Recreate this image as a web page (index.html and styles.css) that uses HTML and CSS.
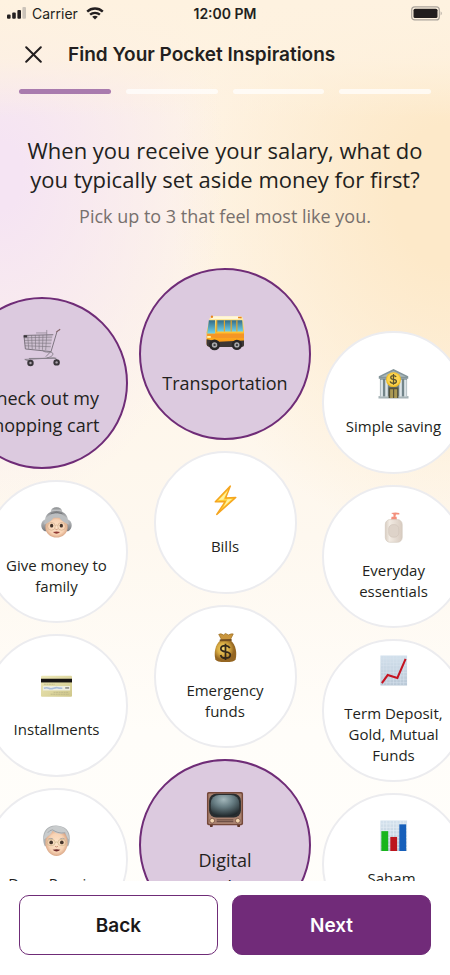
FILE: index.html
```html
<!DOCTYPE html>
<html lang="en">
<head>
<meta charset="utf-8">
<meta name="viewport" content="width=device-width, initial-scale=1">
<title>Find Your Pocket Inspirations</title>
<link rel="stylesheet" href="styles.css">
</head>
<body>
<div class="status">
  <div class="status-left">
    <svg width="19" height="12" viewBox="0 0 19 12" aria-hidden="true"><g fill="#231f20"><rect x="0" y="7.500" width="3.600" height="4.300" rx="1"/><rect x="5.200" y="5.500" width="3.600" height="6.300" rx="1"/><rect x="10.400" y="3" width="3.600" height="8.800" rx="1"/></g><rect x="15.400" y="0" width="3.600" height="11.800" rx="1" fill="#cbc3b9"/></svg>
    <span class="carrier">Carrier</span>
    <svg width="18" height="13" viewBox="0 0 18 13" aria-hidden="true"><g fill="none" stroke="#231f20" stroke-width="2.400"><path d="M1.200 4.600C5.600.500 12.400.500 16.800 4.600"/><path d="M4.100 7.700c2.800-2.500 7-2.500 9.800 0"/></g><path d="M6.200 9.700c1.600-1.400 4-1.400 5.600 0L9 12.500z" fill="#231f20"/></svg>
  </div>
  <span class="time">12:00 PM</span>
  <div class="status-right">
    <svg width="32" height="15" viewBox="0 0 32 15" aria-hidden="true"><rect x=".7" y=".9" width="27.600" height="13" rx="3" fill="none" stroke="#aaa39b" stroke-width="1.200"/><rect x="2.500" y="2.700" width="24" height="9.400" rx="1.500" fill="#211d1e"/><path d="M29.700 5.200q2 2 0 4.400z" fill="#aaa39b"/></svg>
  </div>
</div>
<header class="header">
  <button class="close" type="button" aria-label="Close">
    <svg width="17" height="17" viewBox="0 0 17 17"><path d="M1.200 1.200 15.800 15.800M15.800 1.200 1.200 15.800" stroke="#231f20" stroke-width="2" stroke-linecap="round"/></svg>
  </button>
  <h1 class="title">Find Your Pocket Inspirations</h1>
</header>
<div class="steps"><span class="step step-on"></span><span class="step"></span><span class="step"></span><span class="step"></span></div>
<main class="main">
  <h2 class="question">When you receive your salary, what do you typically set aside money for first?</h2>
  <p class="hint">Pick up to 3 that feel most like you.</p>
  <div class="picker">
    <div class="column column-left">
      <label class="bubble"><input class="tick" type="checkbox" checked>
        <svg class="icon" viewBox="0 0 32 32"><g transform="translate(0 1.500)"><path d="M.8 5.500 25 4.800 22.800 18.200 2 16.800z" fill="#cdbfd0"/><g fill="none" stroke="#7a737d" stroke-width=".5"><path d="M.8 7.600 24.600 7M1 9.800 24.200 9.500M1.200 12l22.600.2M1.600 14.300l21.800.8M4 5.500l.8 11.500M7.200 5.400l.6 11.800M10.400 5.300l.2 12M13.600 5.300v12.200M16.800 5.200l-.4 12.500M20 5l-.9 13M20 1v4M11 3.500h9"/></g><path d="M31 .6 28.600 2.500 23.600 19.200 2 17 .8 5.600 25.500 5" fill="none" stroke="#77707a" stroke-width=".8"/><path d="m28.200 2.600 2.800-2" stroke="#8a6a70" stroke-width="1" stroke-linecap="round"/><path d="M16 18c3 3 7.500.5 9 2.500 1 2-2 3.500-5 4M23.600 19l-4.400 4.500M1.500 25.800 26 24.500q2 0 2.500 2M1.500 25.800l4 1.700M5 25l23-.2" fill="none" stroke="#857e88" stroke-width=".8"/><g fill="#3a363b"><circle cx="6.300" cy="28.800" r="2.700"/><circle cx="28.300" cy="28.300" r="2.700"/><rect x=".6" y="5.500" width="2.800" height="1.800"/></g><g fill="#aca4ad"><circle cx="6.300" cy="28.800" r="1"/><circle cx="28.300" cy="28.300" r="1"/></g></g></svg>
        <span class="text">Check out my shopping cart</span></label>
      <label class="bubble"><input class="tick" type="checkbox">
        <svg class="icon" viewBox="0 0 32 32"><defs><linearGradient id="hair" x2="0" y2="1"><stop stop-color="#7f8285"/><stop offset=".4" stop-color="#c5c7c9"/><stop offset="1" stop-color="#77797d"/></linearGradient><radialGradient id="skin"><stop stop-color="#fde4ca"/><stop offset=".7" stop-color="#f8d3b4"/><stop offset="1" stop-color="#dba989"/></radialGradient></defs><ellipse cx="16" cy="5" rx="6" ry="4.800" fill="url(#hair)"/><path d="M16 4C8 4 5 8 4 13c-5 2-5 10 0 12h24c5-2 5-10 0-12C27 8 24 4 16 4z" fill="url(#hair)"/><path d="M16 10C9 10 5 14 4.500 20 4 27 10 31.500 16 31.500S28 27 27.500 20C27 14 23 10 16 10z" fill="url(#skin)"/><path d="M3 18C5 9 12 6 16 7c4-1 11 2 13 11-4-1-8-4-10-7h-6c-2 3-6 6-10 7z" fill="#bbbec0"/><path d="M10 7q6-3 12 0" fill="none" stroke="#6f7275" stroke-width=".8"/><g fill="#46362c"><ellipse cx="11" cy="19.300" rx="1.700" ry="1.900"/><ellipse cx="21" cy="19.300" rx="1.700" ry="1.900"/></g><g fill="none" stroke="#cfae8b" stroke-width=".7"><circle cx="10.700" cy="20" r="4"/><circle cx="21.300" cy="20" r="4"/><path d="M14.700 19q1.300-1 2.600 0"/></g><path d="M14.800 22.800q1.200 1 2.400 0" fill="none" stroke="#c99174"/><path d="M12.300 25.700q3.700-1 7.400 0-3.700 3.600-7.400 0z" fill="#8f3a35"/></svg>
        <span class="text">Give money to family</span></label>
      <label class="bubble"><input class="tick" type="checkbox">
        <svg class="icon" viewBox="0 0 32 32"><defs><linearGradient id="card" x2="1" y2="1"><stop stop-color="#eee9b8"/><stop offset="1" stop-color="#cfc78a"/></linearGradient></defs><rect x="0" y="5" width="32" height="21.500" rx="1" fill="url(#card)"/><rect y="8" width="32" height="3.800" fill="#181514"/><rect x="2" y="15.500" width="28" height="4.600" fill="#eeeee0"/><path d="M3 17.800q3-1 5 0t5 0 4-.5 5 .5" fill="none" stroke="#a9bdd8" stroke-width="1.700"/><path d="M25 17.500h4" stroke="#494b50"/><path d="M3 13.700h11M13 22h15M10 24h19" stroke="#b9b287" stroke-width=".8" stroke-dasharray="2 .6"/></svg>
        <span class="text">Installments</span></label>
      <label class="bubble"><input class="tick" type="checkbox">
        <svg class="icon" viewBox="0 0 32 32"><path d="M16 .5C7 0 2 6 2.300 14c0 4 .7 6 1.700 8h24c1-2 1.700-4 1.700-8C30 6 25 1 16 .5z" fill="#adb1b3"/><path d="M16 5C8 5 4.500 11 4.500 18.500 4.500 26 10 32 16 32s11.500-6 11.500-13.500C27.500 11 24 5 16 5z" fill="url(#skin)"/><path d="M3 15C3 6 8 1 16 1s13 5 13 14c-2-1-3-5-4-7-5 2-9 1-13-2-2 5-5 5-6 7z" fill="#c9cccd"/><path d="M12 5c3 2 7 4 13 3M7 8q2-3 5-3" fill="none" stroke="#96999c" stroke-width=".8"/><path d="M7.500 14.500q3-1.500 5 0M19.500 14.500q3-1.500 5 0" fill="none" stroke="#aaa59f"/><g fill="#46362c"><circle cx="10.500" cy="18" r="1.900"/><circle cx="21.500" cy="18" r="1.900"/></g><g fill="none" stroke="#cbb78c" stroke-width=".7"><rect x="6.300" y="15" width="8.200" height="6.200" rx="3"/><rect x="17.500" y="15" width="8.200" height="6.200" rx="3"/><path d="M14.500 18q1.500-1.200 3 0"/></g><path d="M14.500 22q1.500 1.300 3 0" fill="none" stroke="#c99174"/><path d="M12 25.500q4-1 8 0-4 3.700-8 0z" fill="#6e2b2c"/></svg>
        <span class="text">Dana Pensiun</span></label>
    </div>
    <div class="column">
      <label class="bubble"><input class="tick" type="checkbox" checked>
        <svg class="icon" viewBox="0 0 32 32"><defs><linearGradient id="bus" x2="0" y2="1"><stop stop-color="#fff1bd"/><stop offset=".35" stop-color="#ffd54a"/><stop offset=".7" stop-color="#ffb01c"/><stop offset="1" stop-color="#f17b16"/></linearGradient><linearGradient id="glass" x2="0" y2="1"><stop stop-color="#356c86"/><stop offset="1" stop-color="#70d3eb"/></linearGradient></defs><g transform="translate(0 1)"><path d="M3 4.500q1-2 4-2h22q2 0 2.300 3L32 16v10q0 2-2 2H3q-2.500 0-2.500-3V16z" fill="url(#bus)"/><path d="M1 17h31v4H10l-9-1z" fill="#f59625"/><path d="M.5 22 11 24l21-1v4q0 1.500-2 1.500H3Q.5 28 .5 26z" fill="#3c3735"/><path d="M2.400 6h5.300v11H1z" fill="url(#glass)"/><path d="M9 6h21.500l.7 9.500H8.700z" fill="url(#glass)"/><path d="M9 16V6M15.500 6v9.500M21.200 6v9.500M26 6v9.500" stroke="#e5a62b" stroke-width="1"/><path d="M4.500 3.800h24" stroke="#fff7d9" stroke-width="2.200"/><g fill="#e9851e"><circle cx="5" cy="3" r="1"/><rect x="27" y="3" width="3" height="1.300"/></g><path d="M1 20h3" stroke="#fff3a8" stroke-width="1.600"/><g fill="#292728"><circle cx="7.200" cy="26.700" r="4.600"/><circle cx="26" cy="26.700" r="4.400"/></g><g fill="#a9aaac"><circle cx="7.200" cy="26.700" r="2.300"/><circle cx="26" cy="26.700" r="2.200"/></g><g fill="#404144"><circle cx="7.200" cy="26.700" r="1"/><circle cx="26" cy="26.700" r="1"/></g></g></svg>
        <span class="text">Transportation</span></label>
      <label class="bubble"><input class="tick" type="checkbox">
        <svg class="icon" viewBox="0 0 32 32"><g transform="translate(0 -3.500)"><path d="M21 1.500 5.500 17.800l10.200-.3L7 30.800 26.600 13.300l-10.500.6z" fill="#ffd236" stroke="#f5a51f" stroke-width="1.500" stroke-linejoin="round"/><path d="M18.500 6 9 16l9-.6-4 7.500 8.700-8.100-8.900.6z" fill="#fff3a2"/></g></svg>
        <span class="text">Bills</span></label>
      <label class="bubble"><input class="tick" type="checkbox">
        <svg class="icon" viewBox="0 0 32 32"><defs><radialGradient id="bag" cx=".4" cy=".4"><stop stop-color="#f6d974"/><stop offset=".55" stop-color="#d8ab42"/><stop offset="1" stop-color="#956622"/></radialGradient></defs><path d="M11 8.500C5 13 4 22 5.500 28q1 3 10.500 3t10.500-3C28 22 27 13 21 8.500z" fill="url(#bag)"/><path d="m12 8-3-5.500Q11 1 14 3l2-1.500L19 3q3-1.500 5-1l-3 6z" fill="#c9953c" stroke="#98691e" stroke-width=".7"/><path d="m11 8.500 10.500-.3" stroke="#765020" stroke-width="2.200" stroke-linecap="round"/><path d="M20.500 16.500Q19 14 16 14c-3 0-4.800 1.500-4.800 3.300 0 4.700 9.800 1.800 9.800 6.200 0 2-2 3.500-5 3.500-2.500 0-4.500-1-5-3.300M16 12v17" fill="none" stroke="#34291a" stroke-width="1.800"/></svg>
        <span class="text">Emergency funds</span></label>
      <label class="bubble"><input class="tick" type="checkbox" checked>
        <svg class="icon" viewBox="0 0 32 32"><defs><radialGradient id="tube" cx=".45" cy=".22" r=".8"><stop stop-color="#a3b7bb"/><stop offset=".45" stop-color="#667c82"/><stop offset="1" stop-color="#20282b"/></radialGradient></defs><path d="M3 29h3l-.5 3h-2zM26 29h3l-.5 3h-2z" fill="#5b3429"/><rect x=".8" y="2.500" width="30.400" height="28" rx="1.500" fill="#75483a"/><rect x="2" y="3.700" width="28" height="25.800" rx="1" fill="#a98270"/><rect x="2.600" y="4" width="26.800" height="20" rx="6" fill="#292d2f"/><rect x="4" y="5" width="24" height="17.800" rx="7" fill="url(#tube)"/><path d="M9 26h14M9 27.500h14" stroke="#61463c" stroke-width=".8"/><g fill="#f4d7b1" stroke="#6c4737" stroke-width=".6"><circle cx="5.200" cy="26.700" r="2"/><circle cx="26.800" cy="26.700" r="2"/></g></svg>
        <span class="text">Digital<br>product</span></label>
    </div>
    <div class="column column-right">
      <label class="bubble"><input class="tick" type="checkbox">
        <svg class="icon" viewBox="0 0 32 32"><path d="M.8 8.500 16 1l15.200 7.500V11H.8z" fill="#84959a"/><path d="M3 9 16 3l13 6z" fill="#a9b7ba"/><path d="M2 11h28v19H2z" fill="#73858a"/><path d="M.5 29h31v2.500H.5z" fill="#a7b4b7"/><g fill="#dce4e7"><rect x="2.500" y="12" width="2.600" height="17.500"/><rect x="7.500" y="12" width="2.600" height="17.500"/><rect x="22" y="12" width="2.600" height="17.500"/><rect x="27" y="12" width="2.600" height="17.500"/></g><rect x="11" y="20" width="10" height="11" fill="#55523a"/><path d="M12.500 22h3v9h-3zM16.700 22h3v9h-3z" fill="#aa9954"/><circle cx="16" cy="12" r="7.700" fill="#f0bd24"/><circle cx="16" cy="11.700" r="6.600" fill="#fbd450"/><path d="M18.700 9.400q-.8-1.700-2.800-1.600c-3.600.2-3.700 3.500.1 4 4.300.6 3.700 4-.2 4-2 0-3-.8-3.200-2M16 6.300v11" fill="none" stroke="#59522d" stroke-width="1.300"/></svg>
        <span class="text">Simple saving</span></label>
      <label class="bubble"><input class="tick" type="checkbox">
        <svg class="icon" viewBox="0 0 32 32"><defs><linearGradient id="soap"><stop stop-color="#d8cdc1"/><stop offset=".25" stop-color="#f2ebe3"/><stop offset="1" stop-color="#d8cbc0"/></linearGradient></defs><path d="M13.500 1q5-1 8.500 0v1.500h-3.500L18 5h1.200l.3 3h-6l.5-3h2V2.700z" fill="#f38f7b"/><rect x="7.500" y="7.800" width="17.500" height="23.500" rx="5" fill="url(#soap)" stroke="#d1c5ba" stroke-width=".6"/><rect x="11" y="13" width="10.500" height="13" rx="4.500" fill="#ded3c9" stroke="#cbbfb5" stroke-width=".5"/></svg>
        <span class="text">Everyday essentials</span></label>
      <label class="bubble"><input class="tick" type="checkbox">
        <svg class="icon" viewBox="0 0 32 32"><defs><linearGradient id="sheet" x2="0" y2="1"><stop stop-color="#d3e1ed"/><stop offset="1" stop-color="#b9c8d6"/></linearGradient></defs><rect x="2.500" y=".5" width="27.500" height="31" fill="url(#sheet)"/><path d="M5.500 1v30M9 1v30M12.500 1v30M16 1v30M19.500 1v30M23 1v30M26.500 1v30M3 4h27M3 7.500h27M3 11h27M3 14.500h27M3 18h27M3 21.500h27M3 25h27M3 28.500h27" stroke="#d9e5ee" stroke-width=".5"/><path d="m4 29 6-8.300 10 3L28.500 4" fill="none" stroke="#c51422" stroke-width="2.100"/></svg>
        <span class="text">Term Deposit, Gold, Mutual Funds</span></label>
      <label class="bubble"><input class="tick" type="checkbox">
        <svg class="icon" viewBox="0 0 32 32"><rect x="2.500" y=".5" width="27.500" height="31.500" fill="url(#sheet)"/><path d="M5.500 1v30M9 1v30M12.500 1v30M16 1v30M19.500 1v30M23 1v30M26.500 1v30M3 4h27M3 7.500h27M3 11h27M3 14.500h27M3 18h27M3 21.500h27M3 25h27M3 28.500h27" stroke="#e6eff6" stroke-width=".7"/><rect x="3.500" y="11.500" width="7" height="20.500" fill="#18b51d"/><rect x="12.700" y="17.500" width="7" height="14.500" fill="#bd151d"/><rect x="22" y="4.500" width="7" height="27.500" fill="#165fba"/></svg>
        <span class="text">Saham,<br>Reksa Dana</span></label>
    </div>
  </div>
</main>
<footer class="footer">
  <button class="button button-back" type="button">Back</button>
  <button class="button button-next" type="button">Next</button>
</footer>
</body>
</html>
```
FILE: styles.css
```css
* {
  box-sizing: border-box;
}

body {
  margin: 0;
  height: 100vh;
  display: flex;
  flex-direction: column;
  overflow: hidden;
  font-family: "Open Sans", sans-serif;
  color: #231f20;
  background:
    linear-gradient(180deg, #fef2e0 0%, rgba(254, 242, 224, 0.8) 6%, rgba(254, 242, 224, 0) 12%),
    radial-gradient(ellipse 50% 34% at 0% 18%, #f5e4f3 10%, rgba(245, 228, 243, 0) 100%),
    radial-gradient(ellipse 62% 36% at 100% 20%, #fde9c9 20%, rgba(253, 233, 201, 0) 100%),
    linear-gradient(180deg, #fef3e5 0%, #fef5e8 30%, #fef8ef 55%, #fffdf9 75%, #fffefb 100%);
}

.status {
  display: grid;
  grid-template-columns: 1fr auto 1fr;
  align-items: center;
  height: 26px;
  padding: 0 7px;
  font-family: Inter, sans-serif;
  font-size: 14px;
}

.status-left {
  display: flex;
  align-items: center;
  gap: 6px;
}

.carrier {
  margin-right: 2px;
}

.time {
  font-weight: 600;
}

.status-right {
  display: flex;
  justify-content: flex-end;
}

.header {
  display: flex;
  align-items: center;
  gap: 26px;
  height: 56px;
  padding: 0 25px;
}

.close {
  display: flex;
  padding: 0;
  border: 0;
  background: none;
}

.title {
  margin: 0;
  font-family: Inter, sans-serif;
  font-size: 19px;
  font-weight: 600;
}

.steps {
  display: flex;
  gap: 15px;
  padding: 7px 19px 0;
}

.step {
  flex: 1;
  height: 5px;
  border-radius: 3px;
  background: rgba(255, 255, 255, 0.7);
}

.step-on {
  background: #a97bae;
}

.main {
  flex: 1;
  min-height: 0;
  display: flex;
  flex-direction: column;
  padding-top: 42px;
}

.question {
  margin: 0;
  padding: 0 19px;
  font-size: 22px;
  font-weight: 400;
  line-height: 29px;
  text-align: center;
}

.hint {
  margin: 10px 0 40px;
  font-size: 18px;
  line-height: 24px;
  text-align: center;
  color: #77706d;
}

.picker {
  flex: 1;
  min-height: 0;
  display: flex;
  justify-content: center;
  gap: 11px;
  overflow: hidden;
}

.column {
  flex: none;
  width: 172px;
  display: flex;
  flex-direction: column;
  align-items: center;
  gap: 11px;
}

.column-left {
  align-items: flex-end;
  padding-top: 29px;
}

.column-right {
  align-items: flex-start;
  padding-top: 63px;
}

.bubble {
  flex: none;
  width: 143px;
  height: 143px;
  display: flex;
  flex-direction: column;
  align-items: center;
  justify-content: center;
  gap: 17px;
  padding: 0 14px;
  border: 2px solid #ececef;
  border-radius: 50%;
  background: #fff;
  font-size: 15px;
  line-height: 21px;
  text-align: center;
}

.bubble:has(:checked) {
  width: 172px;
  height: 172px;
  gap: 20px;
  border-color: #6f2c77;
  background: #dccadf;
  font-size: 18px;
  line-height: 27px;
}

.tick {
  position: absolute;
  opacity: 0;
  pointer-events: none;
}

.icon {
  flex: none;
  width: 31px;
  height: 31px;
  overflow: visible;
}

.bubble:has(:checked) .icon {
  width: 38px;
  height: 38px;
}

.footer {
  display: flex;
  gap: 14px;
  padding: 14px 19px 20px;
  background: #fff;
}

.button {
  flex: 1;
  height: 60px;
  border: 1px solid #6f2c77;
  border-radius: 10px;
  font-family: Inter, sans-serif;
  font-size: 19px;
  font-weight: 600;
}

.button-back {
  background: #fff;
  color: #1b1819;
}

.button-next {
  background: #712b79;
  color: #fff;
}
```
